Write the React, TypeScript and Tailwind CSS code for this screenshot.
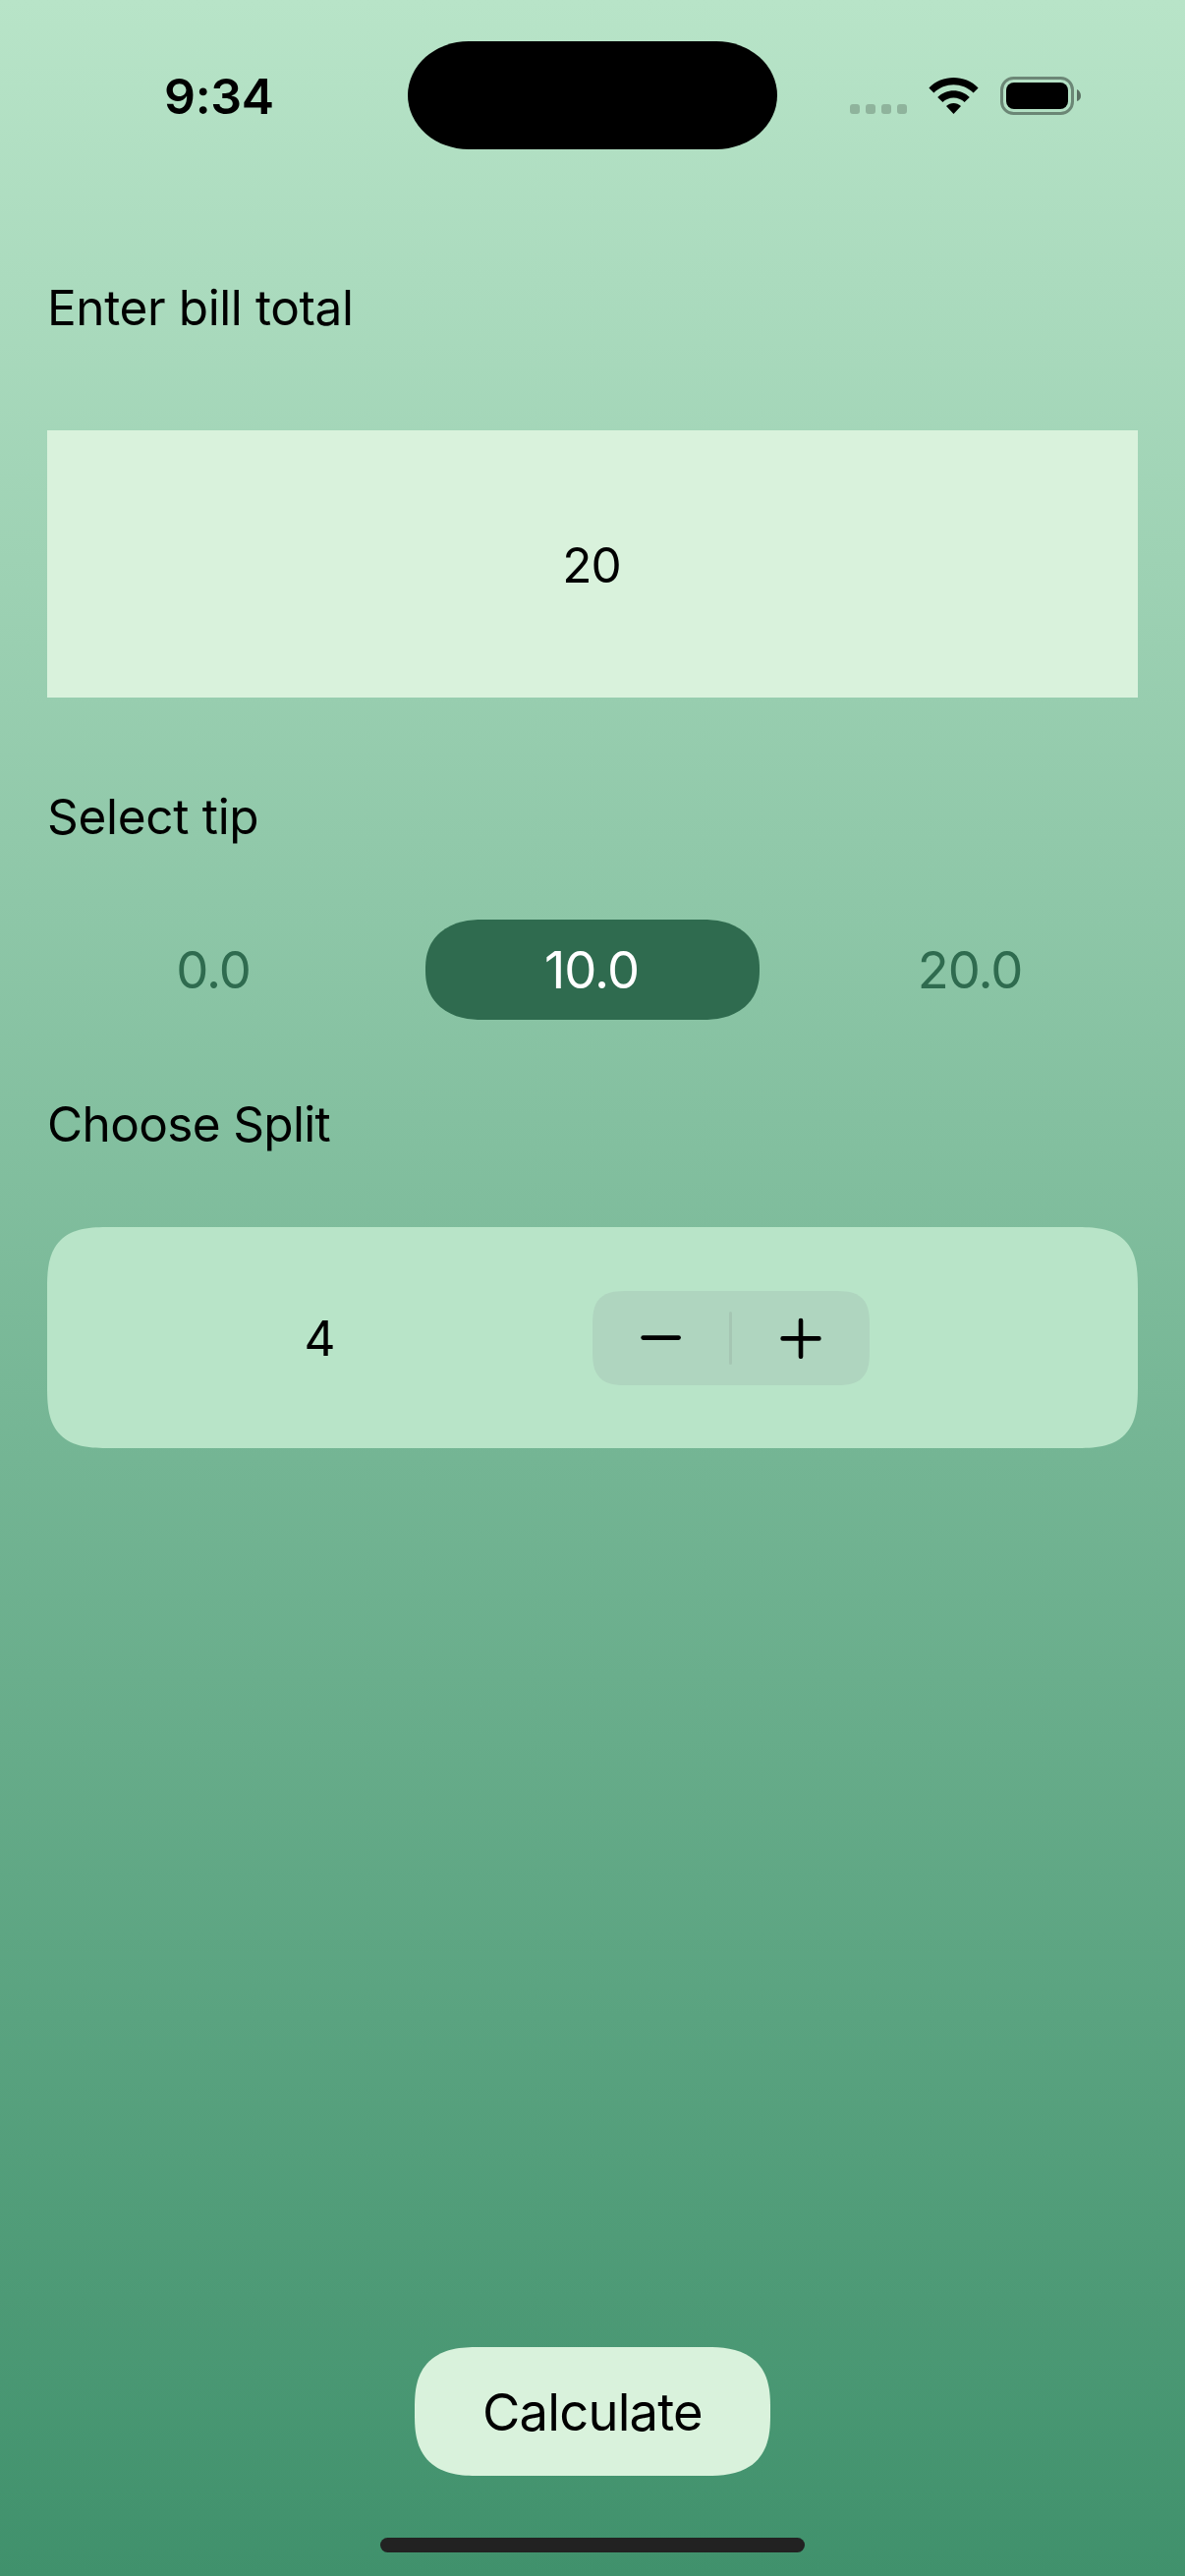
import { useState } from "react";

const TIPS = ["0.0", "10.0", "20.0"];

function StatusBar() {
  return (
    <header className="relative flex h-[195px] shrink-0 items-start">
      <div className="ml-[167px] mt-[68px] text-[50px] leading-[60px] font-semibold tracking-[-0.3px] whitespace-nowrap">
        9:34
      </div>
      <div className="absolute left-[415px] top-[41.5px] h-[110.5px] w-[376px] rounded-[62px/55px] bg-black" />
      <div className="absolute left-[865px] top-[78px] flex h-[39px] items-start">
        <div className="mt-[28px] flex gap-[6px]">
          {[0, 1, 2, 3].map((i) => (
            <span key={i} className="size-[10px] rounded-[3px] bg-black/20" />
          ))}
        </div>
        <svg className="ml-[22px] mt-px" width="51" height="37" viewBox="0 0 51 37">
          <path d="M0.4 10.4C14-3.4 37-3.4 50.6 10.4L45.6 15.6C34.4 4.6 16.6 4.6 5.4 15.6Z" />
          <path d="M9.2 20C18.2 10.9 32.8 10.9 41.8 20L36.6 25.1C30.5 19 20.5 19 14.4 25.1Z" />
          <path d="M18 29C22.3 25 28.7 25 33 29L25.5 37Z" />
        </svg>
        <svg className="ml-[22px]" width="83" height="39" viewBox="0 0 83 39">
          <rect x="1.5" y="1.5" width="72" height="36" rx="12" fill="none" stroke="#000" strokeOpacity="0.4" strokeWidth="3" />
          <rect x="6" y="6" width="63" height="27" rx="8" />
          <path d="M78 13C83.3 15.2 83.3 23.8 78 25Z" fillOpacity="0.5" />
        </svg>
      </div>
    </header>
  );
}

function Label({ children, tracking }: { children: string; tracking: string }) {
  return <h2 className={`h-[60px] whitespace-nowrap text-[49.5px] leading-[60px] ${tracking}`}>{children}</h2>;
}

function Stepper({ onChange }: { onChange: (delta: number) => void }) {
  return (
    <div className="flex h-[96px] w-[282px] items-center rounded-[27px] bg-[#afd5bf] supports-[corner-shape:squircle]:rounded-[37px] supports-[corner-shape:squircle]:[corner-shape:superellipse(1.6)]">
      <button aria-label="Decrease" onClick={() => onChange(-1)} className="flex h-full w-[139px] items-center justify-center">
        <svg width="42" height="42" viewBox="0 0 42 42" stroke="#000" strokeWidth="4.6" strokeLinecap="round">
          <path d="M2.6 20.6H38.6" />
        </svg>
      </button>
      <span className="h-[54px] w-[3px] rounded-full bg-[#a5c6b3]" />
      <button aria-label="Increase" onClick={() => onChange(1)} className="flex h-full w-[140px] items-center justify-center">
        <svg width="42" height="42" viewBox="0 0 42 42" stroke="#000" strokeWidth="4.6" strokeLinecap="round">
          <path d="M2.6 21.4H39.4M21 3V39.8" />
        </svg>
      </button>
    </div>
  );
}

export default function App() {
  const [tip, setTip] = useState("10.0");
  const [split, setSplit] = useState(4);

  return (
    <div className="flex h-[2622px] w-[1206px] flex-col overflow-hidden bg-linear-to-b/srgb from-[#b8e4c8] to-[#40916c] font-['Inter',sans-serif] text-black">
      <StatusBar />
      <main className="flex flex-1 flex-col px-[48px] pt-[88px]">
        <Label tracking="tracking-[-0.4px]">Enter bill total</Label>
        <div className="mt-[95px] flex h-[272px] shrink-0 items-center justify-center bg-[#d9f2dc] pt-px pr-[2px] text-[49.5px] leading-[60px] tracking-[-1px]">
          20
        </div>
        <div className="mt-[91px]">
          <Label tracking="tracking-[-0.3px]">Select tip</Label>
        </div>
        <div className="mt-[75px] grid h-[102px] grid-cols-3 gap-[45px]">
          {TIPS.map((t) => (
            <button
              key={t}
              onClick={() => setTip(t)}
              className={
                t === tip
                  ? "rounded-[50px/46px] bg-[#2f6b4f] pr-[2px] text-[52.5px] tracking-[-1px] text-white supports-[corner-shape:squircle]:rounded-[58px/50px] supports-[corner-shape:squircle]:[corner-shape:superellipse(1.2)]"
                  : "pr-[2px] text-[52.5px] tracking-[-1px] text-[#2f6b4f]"
              }
            >
              {t}
            </button>
          ))}
        </div>
        <div className="mt-[76px]">
          <Label tracking="tracking-[-0.65px]">Choose Split</Label>
        </div>
        <div className="mt-[75px] grid h-[225px] shrink-0 grid-cols-2 items-center rounded-[48px] bg-[#b8e4c8] supports-[corner-shape:squircle]:rounded-[64px] supports-[corner-shape:squircle]:[corner-shape:superellipse(1.55)]">
          <span className="text-center text-[49.5px] leading-[60px]">{split}</span>
          <Stepper onChange={(d) => setSplit((s) => Math.max(1, s + d))} />
        </div>
        <button className="mt-auto mb-[63px] flex h-[131px] w-[362px] shrink-0 items-center justify-center self-center rounded-[52px] bg-[#d9f2dc] text-[52.5px] leading-[60px] tracking-[-0.8px] supports-[corner-shape:squircle]:rounded-[65px/62px] supports-[corner-shape:squircle]:[corner-shape:superellipse(1.4)]">
          Calculate
        </button>
      </main>
      <footer className="flex h-[39px] shrink-0 justify-center">
        <span className="h-[15px] w-[432px] rounded-full bg-[#222222]" />
      </footer>
    </div>
  );
}
